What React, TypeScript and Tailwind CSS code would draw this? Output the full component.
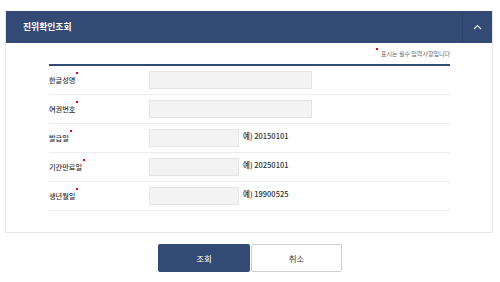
const rows = [
  { label: "한글성명", wide: true, ex: "" },
  { label: "여권번호", wide: true, ex: "" },
  { label: "발급일", wide: false, ex: "예) 20150101" },
  { label: "기간만료일", wide: false, ex: "예) 20250101" },
  { label: "생년월일", wide: false, ex: "예) 19900525" }
]

export default function App() {
  return (
    <div
      className="w-[500px] h-[282px] bg-white pt-[11px]"
      style={{ fontFamily: '"Noto Sans CJK KR", "Noto Sans", sans-serif' }}
    >
      <div className="ml-[5px] mr-[7px] border border-[#e6e6e6] border-t-0">
        <div className="h-[32px] bg-[#334a74] flex items-center justify-between">
          <span className="pl-[17px] text-white font-bold text-[8.8px] leading-none">
            진위확인조회
          </span>
          <div className="w-[30px] h-full border-l border-[#2d4268] flex items-center justify-center">
            <svg width="9" height="6" viewBox="0 0 9 6" fill="none">
              <polyline points="1,5 4.5,1.5 8,5" stroke="#dfe5ef" strokeWidth="1.2" />
            </svg>
          </div>
        </div>
        <div className="pl-[43px] pr-[42px] pb-[21px]">
          <div className="h-[21px] flex items-center justify-end">
            <span className="relative text-[6px] text-[#666] leading-none">
              <span className="absolute -left-[5px] -top-[3px] w-[2px] h-[2px] bg-[#e60012]" />
              표시는 필수 입력사항입니다
            </span>
          </div>
          <div className="border-t-2 border-[#334a74]">
            {rows.map((row, i) => (
              <div key={i} className="h-[29px] flex items-center border-b border-[#ececec]">
                <div className="w-[100px] text-[7.2px] text-[#333] font-medium">
                  <span className="relative">
                    {row.label}
                    <span className="absolute -right-[3px] -top-[3px] w-[2px] h-[2px] bg-[#e60012]" />
                  </span>
                </div>
                <div
                  className={`h-[18px] bg-[#f3f3f3] border border-[#e4e4e4] ${
                    row.wide ? "w-[163px]" : "w-[90px]"
                  }`}
                />
                {row.ex && (
                  <span className="ml-[4px] -mt-[4px] text-[7.5px] text-[#333] font-medium">
                    {row.ex}
                  </span>
                )}
              </div>
            ))}
          </div>
        </div>
      </div>
      <div className="mt-[11px] flex justify-center gap-[1px]">
        <button className="w-[92px] h-[28px] bg-[#334a74] text-white text-[8.5px] rounded-[2px]">
          조회
        </button>
        <button className="w-[91px] h-[28px] bg-white border border-[#cfcfcf] text-[#333] text-[8.5px] rounded-[2px]">
          취소
        </button>
      </div>
    </div>
  )
}
